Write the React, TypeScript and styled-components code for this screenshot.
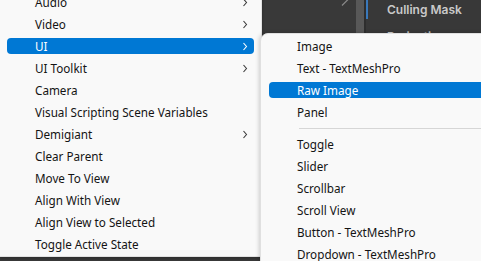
import * as React from 'react'
import styled, { createGlobalStyle } from 'styled-components'

const GlobalStyle = createGlobalStyle`
  html, body {
    margin: 0;
    padding: 0;
    background: #2d2d2d;
  }
  * {
    box-sizing: border-box;
  }
`

// Editor panels behind the menus
const Screen = styled.div`
  position: relative;
  width: 481px;
  height: 261px;
  overflow: hidden;
  background: #2d2d2d;
`

const Editor = styled.div`
  display: flex;
  height: 100%;
`

const ScenePane = styled.div`
  position: relative;
  width: 356px;
  background: #393939;
`

const Grip = styled.svg`
  position: absolute;
  left: 341px;
  top: 0;
`

const ScrollStrip = styled.div`
  width: 8px;
  background: #585858;
`

const Gutter = styled.div`
  width: 2px;
  background: #2e2e2e;
`

const Inspector = styled.div`
  flex: 1;
  display: flex;
  flex-direction: column;
  background: #383838;
`

const InspectorRow = styled.div<{ $selected?: boolean }>`
  height: ${props => props.$selected ? '19px' : '20px'};
  margin-top: ${props => props.$selected ? '0' : '7px'};
  display: flex;
  align-items: center;
  padding-left: 19px;
  border-left: 2px solid ${props => props.$selected ? '#3a79bb' : 'transparent'};
  font-family: Inter, "Noto Sans", sans-serif;
  font-size: 12px;
  font-weight: 600;
  color: #c9c9c9;
`

// Context menus
const Menu = styled.div`
  position: absolute;
  left: 0;
  top: -9px;
  width: 262px;
  padding-bottom: 1px;
  background: #f9f9f9;
  border-bottom: 1px solid #e2e2e2;
  border-right: 1px solid #e2e2e2;
  box-shadow: 0 1px 3px rgba(0, 0, 0, 0.25);
`

const SubMenu = styled.div`
  position: absolute;
  left: 260px;
  top: 33px;
  width: 240px;
  height: 240px;
  padding-top: 1px;
  background: #f9f9f9;
  border: 1px solid #e0e0e0;
  border-radius: 8px 0 0 0;
  box-shadow: -1px 0 4px rgba(0, 0, 0, 0.18);
`

const Row = styled.div`
  height: 22px;
  padding: 3px 7px 3px 7px;
`

const SubRow = styled(Row)`
  padding-left: 8px;
  padding-right: 0;
`

const RowBody = styled.div<{ $active?: boolean }>`
  height: 16px;
  display: flex;
  align-items: center;
  justify-content: space-between;
  padding: 0 6px 0 28px;
  border-radius: 4px;
  background: ${props => props.$active ? '#0078d4' : 'transparent'};
  color: ${props => props.$active ? '#ffffff' : '#141414'};
  font-family: "Noto Sans", "Noto Sans CJK KR", sans-serif;
  font-size: 11.7px;
  white-space: nowrap;
`

const Separator = styled.div`
  height: 10px;
  display: flex;
  align-items: center;
  padding-left: 38px;

  &::after {
    content: '';
    flex: 1;
    height: 1px;
    background: #d6d6d6;
  }
`

const Chevron: React.FC<{ light?: boolean }> = ({ light }) => (
  <svg width="6" height="9" viewBox="0 0 6 9">
    <polyline points="1.5,1 4.5,4.5 1.5,8" fill="none" stroke={light ? '#ffffff' : '#3a3a3a'} strokeWidth="1.1" />
  </svg>
)

type Item = { label: string, sub?: boolean, active?: boolean }

const mainItems: Item[] = [
  { label: 'Audio', sub: true },
  { label: 'Video', sub: true },
  { label: 'UI', sub: true, active: true },
  { label: 'UI Toolkit', sub: true },
  { label: 'Camera' },
  { label: 'Visual Scripting Scene Variables' },
  { label: 'Demigiant', sub: true },
  { label: 'Clear Parent' },
  { label: 'Move To View' },
  { label: 'Align With View' },
  { label: 'Align View to Selected' },
  { label: 'Toggle Active State' },
]

const uiGroups: Item[][] = [
  [
    { label: 'Image' },
    { label: 'Text - TextMeshPro' },
    { label: 'Raw Image', active: true },
    { label: 'Panel' },
  ],
  [
    { label: 'Toggle' },
    { label: 'Slider' },
    { label: 'Scrollbar' },
    { label: 'Scroll View' },
    { label: 'Button - TextMeshPro' },
    { label: 'Dropdown - TextMeshPro' },
  ],
]

export default function App() {
  return (
    <>
      <GlobalStyle />
      <Screen>
        <Editor>
          <ScenePane>
            <Grip width="8" height="6" viewBox="0 0 8 6">
              <line x1="1" y1="5.5" x2="7" y2="-0.5" stroke="#8a8a8a" strokeWidth="1.2" />
            </Grip>
          </ScenePane>
          <ScrollStrip />
          <Gutter />
          <Inspector>
            <InspectorRow $selected>Culling Mask</InspectorRow>
            <InspectorRow>Projection</InspectorRow>
          </Inspector>
        </Editor>

        <Menu>
          {mainItems.map(item => (
            <Row key={item.label}>
              <RowBody $active={item.active}>
                <span>{item.label}</span>
                {item.sub && <Chevron light={item.active} />}
              </RowBody>
            </Row>
          ))}
        </Menu>

        <SubMenu>
          {uiGroups.map((group, i) => (
            <React.Fragment key={i}>
              {i > 0 && <Separator />}
              {group.map(item => (
                <SubRow key={item.label}>
                  <RowBody $active={item.active}>
                    <span>{item.label}</span>
                  </RowBody>
                </SubRow>
              ))}
            </React.Fragment>
          ))}
        </SubMenu>
      </Screen>
    </>
  )
}
